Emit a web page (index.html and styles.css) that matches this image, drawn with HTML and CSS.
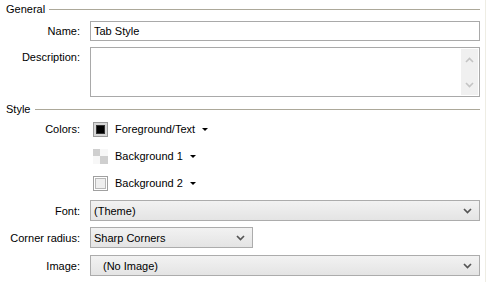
FILE: index.html
```html
<!DOCTYPE html>
<html>
<head>
<meta charset="utf-8">
<link rel="stylesheet" href="styles.css">
</head>
<body>
<div class="panel">
  <div class="group-head head-general"><span class="group-title">General</span><span class="group-line"></span></div>
  <div class="row row-name">
    <div class="label">Name:</div>
    <div class="textbox">Tab Style</div>
  </div>
  <div class="row row-desc">
    <div class="label label-top">Description:</div>
    <div class="textarea">
      <div class="vscroll">
        <svg width="9" height="6" viewBox="0 0 9 6"><path d="M1 5 L4.5 1.5 L8 5" fill="none" stroke="#c4c4c4" stroke-width="1.6"/></svg>
        <svg width="9" height="6" viewBox="0 0 9 6"><path d="M1 1 L4.5 4.5 L8 1" fill="none" stroke="#c4c4c4" stroke-width="1.6"/></svg>
      </div>
    </div>
  </div>

  <div class="group-head head-style"><span class="group-title">Style</span><span class="group-line"></span></div>
  <div class="row row-color first">
    <div class="label">Colors:</div>
    <div class="color-btn">
      <span class="swatch swatch-fg"><span class="swatch-inner"></span></span>
      <span class="color-text">Foreground/Text</span>
      <span class="tri"></span>
    </div>
  </div>
  <div class="row row-color">
    <div class="label"></div>
    <div class="color-btn">
      <span class="swatch swatch-check"><i></i><i></i><i></i><i></i></span>
      <span class="color-text">Background 1</span>
      <span class="tri"></span>
    </div>
  </div>
  <div class="row row-color">
    <div class="label"></div>
    <div class="color-btn">
      <span class="swatch swatch-bg2"><span class="swatch-inner"></span></span>
      <span class="color-text">Background 2</span>
      <span class="tri"></span>
    </div>
  </div>

  <div class="row row-select row-font">
    <div class="label">Font:</div>
    <div class="select">
      <span class="select-text">(Theme)</span>
      <svg class="chev" width="9" height="6" viewBox="0 0 9 6"><path d="M1 1 L4.5 4.5 L8 1" fill="none" stroke="#555" stroke-width="1.7"/></svg>
    </div>
  </div>
  <div class="row row-select row-corner">
    <div class="label">Corner radius:</div>
    <div class="select select-short">
      <span class="select-text">Sharp Corners</span>
      <svg class="chev" width="9" height="6" viewBox="0 0 9 6"><path d="M1 1 L4.5 4.5 L8 1" fill="none" stroke="#555" stroke-width="1.7"/></svg>
    </div>
  </div>
  <div class="row row-select row-image">
    <div class="label">Image:</div>
    <div class="select">
      <span class="select-text indent">(No Image)</span>
      <svg class="chev" width="9" height="6" viewBox="0 0 9 6"><path d="M1 1 L4.5 4.5 L8 1" fill="none" stroke="#555" stroke-width="1.7"/></svg>
    </div>
  </div>
</div>
</body>
</html>
```
FILE: styles.css
```css
html, body {
  margin: 0;
  padding: 0;
  background: #ffffff;
}
body {
  font-family: "Liberation Sans", Arial, sans-serif;
  font-size: 11px;
  color: #000;
}
.panel {
  box-sizing: border-box;
  width: 486px;
  height: 282px;
  border-right: 1px solid #eeede4;
  padding-right: 5px;
  background: #fff;
}
.group-head {
  display: flex;
  align-items: center;
  height: 19px;
  padding-left: 6px;
}
.group-title {
  line-height: 19px;
}
.group-line {
  flex: 1;
  height: 1px;
  background: #aca899;
  margin-left: 4px;
  margin-top: -1px;
}
.head-style .group-line {
  margin-left: 5px;
}
.head-style {
  margin-top: 3px;
}
.row {
  display: grid;
  grid-template-columns: 80px 1fr;
  column-gap: 10px;
  align-items: center;
}
.label {
  text-align: right;
  white-space: nowrap;
}
.label-top {
  align-self: start;
  padding-top: 4px;
}
.row-name {
  margin-top: 2px;
}
.textbox {
  box-sizing: border-box;
  height: 20px;
  border: 1px solid #abadb3;
  border-color: #a9a9a9;
  padding-left: 3px;
  line-height: 18px;
}
.row-desc {
  margin-top: 6px;
}
.textarea {
  box-sizing: border-box;
  height: 50px;
  border: 1px solid #a9a9a9;
  display: flex;
  justify-content: flex-end;
  padding: 1px;
}
.vscroll {
  width: 17px;
  background: #f0f0f0;
  display: flex;
  flex-direction: column;
  justify-content: space-between;
  align-items: center;
  padding: 8px 0 7px;
  box-sizing: border-box;
}
.vscroll svg {
  display: block;
}
.row-color {
  height: 20px;
  margin-top: 7px;
}
.row-color.first {
  margin-top: 0;
}
.color-btn {
  display: flex;
  align-items: center;
  padding-left: 3px;
}
.swatch {
  box-sizing: border-box;
  width: 15px;
  height: 15px;
  display: inline-block;
  flex: none;
}
.swatch-fg {
  border: 1px solid #9a9a9a;
  padding: 2px;
  background: #d6d6d6;
}
.swatch-fg .swatch-inner {
  display: block;
  width: 9px;
  height: 9px;
  background: #000;
  box-sizing: border-box;
  border: 1px solid #333;
}
.swatch-check {
  display: grid;
  grid-template-columns: 7px 8px;
  grid-template-rows: 7px 8px;
}
.swatch-check i:nth-child(1),
.swatch-check i:nth-child(4) {
  background: #cfcfcf;
}
.swatch-check i:nth-child(2),
.swatch-check i:nth-child(3) {
  background: #f7f7f7;
}
.swatch-bg2 {
  border: 1px solid #a0a0a0;
  padding: 1px;
  background: #fff;
}
.swatch-bg2 .swatch-inner {
  display: block;
  width: 11px;
  height: 11px;
  box-sizing: border-box;
  border: 1px solid #b8b8b8;
  background: #efefef;
}
.color-text {
  margin-left: 7px;
}
.tri {
  width: 0;
  height: 0;
  border-left: 3px solid transparent;
  border-right: 3px solid transparent;
  border-top: 3px solid #000;
  margin-left: 7px;
  margin-top: 1px;
}
.row-select {
  height: 21px;
}
.row-font {
  margin-top: 7px;
}
.row-corner {
  margin-top: 6px;
}
.row-image {
  margin-top: 7px;
}
.select {
  box-sizing: border-box;
  height: 21px;
  border: 1px solid #acacac;
  background: linear-gradient(#f2f2f2, #e4e4e4);
  display: flex;
  align-items: center;
  justify-content: space-between;
  padding: 0 7px 0 3px;
}
.select-short {
  width: 163px;
}
.select-text.indent {
  padding-left: 9px;
}
.chev {
  display: block;
}
```
